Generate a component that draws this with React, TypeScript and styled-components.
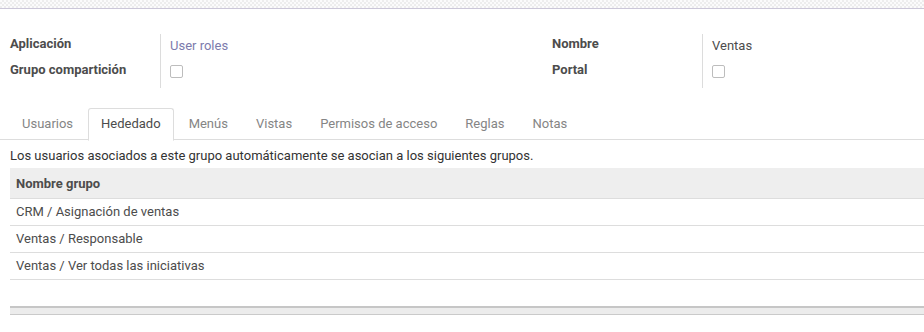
import React from "react";
import styled, { createGlobalStyle } from "styled-components";

const Global = createGlobalStyle`
  html, body { margin: 0; padding: 0; background: #ffffff; }
  body {
    font-family: Roboto, "Noto Sans", "Liberation Sans", sans-serif;
    font-size: 13px;
    color: #4c4c4c;
  }
  * { box-sizing: border-box; }
`;

const Page = styled.div`
  width: 924px;
  height: 332px;
  overflow: hidden;
  background: #ffffff;
`;

const Strip = styled.div`
  height: 9px;
  border-bottom: 1px solid #cbc7d8;
  background-color: #f7f7f7;
  background-image: conic-gradient(#ededed 25%, #fbfbfb 0 50%, #ededed 0 75%, #fbfbfb 0);
  background-size: 4px 4px;
`;

const Header = styled.div`
  display: grid;
  grid-template-columns: 542px 1fr;
  padding: 26px 0 0 10px;
`;

const Group = styled.div`
  display: grid;
  grid-template-columns: 150px 1fr;
  grid-auto-rows: 26px;
`;

const Label = styled.div`
  font-weight: bold;
  color: #4c4c4c;
  line-height: 18px;
`;

const Value = styled.div<{ $last?: boolean }>`
  border-left: 1px solid #dcdcdc;
  padding-left: 9px;
  line-height: 18px;
  margin-top: -1px;
  padding-top: ${(p) => (p.$last ? "5px" : "3px")};
  ${(p) => (p.$last ? "height: 28px;" : "")}
`;

const Link = styled.span`
  color: #7c7bad;
`;

const Check = styled.span`
  display: inline-block;
  width: 13px;
  height: 13px;
  border: 1px solid #bdbdbd;
  border-radius: 2px;
  background: #fff;
`;

const TabBar = styled.div`
  display: flex;
  margin-top: 21px;
  padding-left: 9px;
  border-bottom: 1px solid #dddddd;
  height: 32px;
`;

const Tab = styled.div<{ $active?: boolean }>`
  height: ${(p) => (p.$active ? "33px" : "32px")};
  padding: 0 12px 2px;
  margin-right: 2px;
  display: flex;
  align-items: center;
  color: ${(p) => (p.$active ? "#4c4c4c" : "#858585")};
  border: 1px solid ${(p) => (p.$active ? "#dddddd" : "transparent")};
  border-bottom: ${(p) => (p.$active ? "1px solid #ffffff" : "none")};
  border-radius: 3px 3px 0 0;
  background: ${(p) => (p.$active ? "#ffffff" : "transparent")};
  margin-bottom: -1px;
`;

const Notice = styled.div`
  padding: 7px 0 0 10px;
  line-height: 17px;
  color: #333333;
`;

const Table = styled.div`
  margin: 4px 0 0 10px;
`;

const HeadRow = styled.div`
  display: flex;
  align-items: center;
  height: 31px;
  padding-left: 6px;
  background: #eeeeee;
  font-weight: bold;
  color: #4c4c4c;
  border-bottom: 1px solid #dddddd;
`;

const Row = styled.div`
  display: flex;
  align-items: center;
  height: 27px;
  padding: 0 0 2px 6px;
  color: #4c4c4c;
  border-bottom: 1px solid #dddddd;
`;

const Spacer = styled.div`
  height: 26px;
`;

const Foot = styled.div`
  height: 9px;
  background: #ececec;
  border-top: 2px solid #c6c6c6;
  border-bottom: 1px solid #cacaca;
`;

const tabs = ["Usuarios", "Hededado", "Menús", "Vistas", "Permisos de acceso", "Reglas", "Notas"];
const rows = ["CRM / Asignación de ventas", "Ventas / Responsable", "Ventas / Ver todas las iniciativas"];

export default function App() {
  return (
    <Page>
      <Global />
      <Strip />
      <Header>
        <Group>
          <Label>Aplicación</Label>
          <Value>
            <Link>User roles</Link>
          </Value>
          <Label>Grupo compartición</Label>
          <Value $last>
            <Check />
          </Value>
        </Group>
        <Group>
          <Label>Nombre</Label>
          <Value>Ventas</Value>
          <Label>Portal</Label>
          <Value $last>
            <Check />
          </Value>
        </Group>
      </Header>
      <TabBar>
        {tabs.map((t) => (
          <Tab key={t} $active={t === "Hededado"}>
            {t}
          </Tab>
        ))}
      </TabBar>
      <Notice>Los usuarios asociados a este grupo automáticamente se asocian a los siguientes grupos.</Notice>
      <Table>
        <HeadRow>Nombre grupo</HeadRow>
        {rows.map((r) => (
          <Row key={r}>{r}</Row>
        ))}
        <Spacer />
        <Foot />
      </Table>
    </Page>
  );
}
